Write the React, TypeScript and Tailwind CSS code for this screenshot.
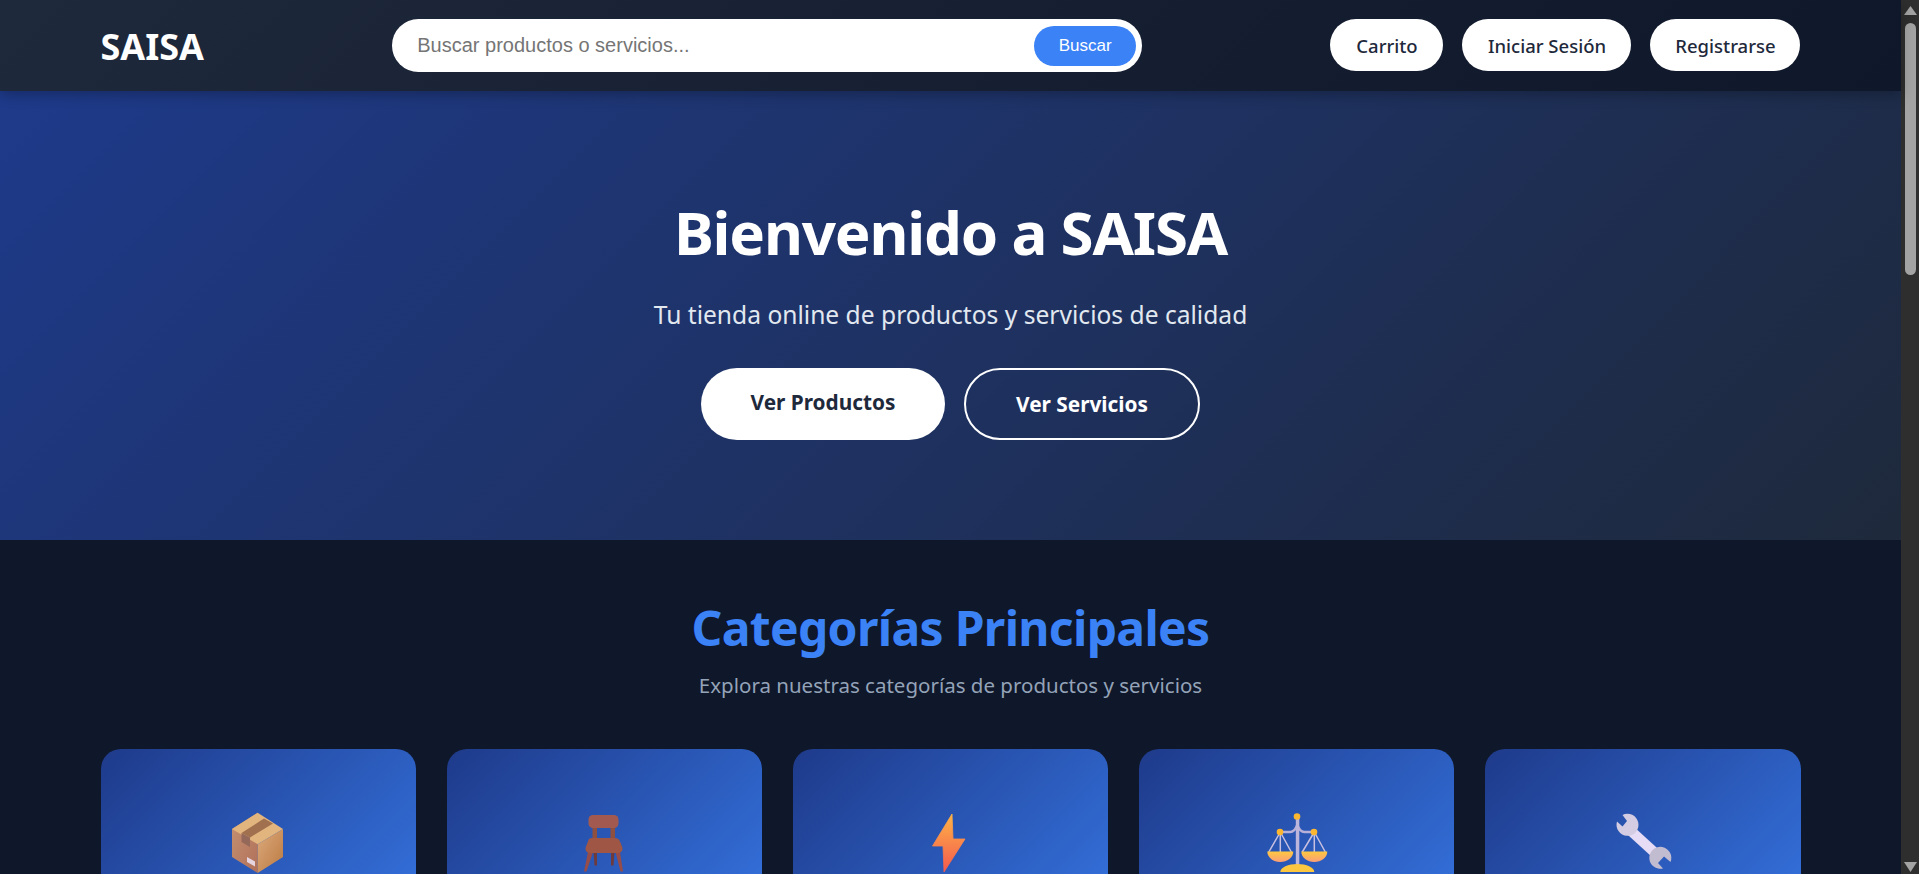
import React from 'react';

const BoxIcon = () => (
  <svg width="100" height="74" viewBox="0 0 100 74">
    <defs>
      <linearGradient id="boxLeft" x1="0" y1="0" x2="1" y2="1">
        <stop offset="0" stopColor="#c69272" />
        <stop offset="1" stopColor="#b0705a" />
      </linearGradient>
      <linearGradient id="boxRight" x1="0" y1="0" x2="1" y2="1">
        <stop offset="0" stopColor="#dcaa7c" />
        <stop offset="1" stopColor="#bb7a42" />
      </linearGradient>
    </defs>
    <g transform="translate(2 0)">
      <path d="M47.7 12.7 22 29v28l25.7 16z" fill="url(#boxLeft)" />
      <path d="M47.7 44.3 73 29v28L47.7 73z" fill="url(#boxRight)" />
      <path d="M47.7 12.7 73 29 47.7 44.3 22 29z" fill="#e2b47e" />
      <path d="M54 18.5 63 23.5 40 37.5 31.5 33z" fill="#a0704f" />
      <path d="M31.5 33 40 37.5V47l-8.5-5z" fill="#94695a" />
      <path d="M37 57l8 4.500V66.500l-8-4.500z" fill="#e6d5e0" />
    </g>
  </svg>
);

const ChairIcon = () => (
  <svg width="100" height="74" viewBox="0 0 100 74">
    <g transform="translate(5.500 0)">
      <rect x="33" y="27" width="4.500" height="14" fill="#8f5040" />
      <rect x="51" y="27" width="4.500" height="14" fill="#8f5040" />
      <path d="M34 52 35 65.500h2.500V52zM51.500 52v13.500H54L55 52z" fill="#6e3a3c" />
      <path d="M28.500 52 24.500 71.500h2.500L33.500 52zM56 52l5 19.500h2.500L60.500 52z" fill="#964c48" />
      <rect x="29" y="15" width="30" height="13" rx="4.500" fill="#a25a50" />
      <path d="M33 38h22c3 0 4.500 1 5.500 3.500l2 5c1.500 3.500-.5 6.500-4 6.500h-28c-3.500 0-5.500-3-4-6.500l2-5C29 39 30 38 33 38z" fill="#a05645" />
    </g>
  </svg>
);

const BoltIcon = () => (
  <svg width="100" height="74" viewBox="0 0 100 74">
    <defs>
      <linearGradient id="bolt" x1="0" y1="0" x2="0" y2="1">
        <stop offset="0" stopColor="#fdb346" />
        <stop offset="1" stopColor="#f4594f" />
      </linearGradient>
    </defs>
    <g transform="translate(9.500 0)">
      <path d="M42.500 14 43.500 39H55.500L34.500 72 33.500 46H23z" fill="url(#bolt)" stroke="url(#bolt)" strokeWidth="0.800" strokeLinejoin="round" />
    </g>
  </svg>
);

const ScaleIcon = () => (
  <svg width="100" height="74" viewBox="0 0 100 74">
    <defs>
      <linearGradient id="pan" x1="0" y1="0" x2="0" y2="1">
        <stop offset="0" stopColor="#fdc83f" />
        <stop offset="1" stopColor="#fb9e78" />
      </linearGradient>
    </defs>
    <g transform="translate(3.300 0)">
      <path d="M30 32 18.500 52M30 32V52M30 32 41 52" stroke="#c8c0e0" strokeWidth="1.500" fill="none" />
      <path d="M64 32 52 52M64 32V52M64 32 75 52" stroke="#c8c0e0" strokeWidth="1.500" fill="none" />
      <path d="M30 32h10c3 0 5-2 7-7 2 5 4 7 7 7h10" stroke="#b7b0d8" strokeWidth="2.500" fill="none" />
      <rect x="45.500" y="17" width="3.500" height="50" fill="#bdb6dc" />
      <path d="M17 51.500h26c0 6-6 10.500-13 10.500s-13-4.500-13-10.500zM51 51.500h26c0 6-6 10.500-13 10.500s-13-4.500-13-10.500z" fill="url(#pan)" />
      <path d="M30 72c0-4.500 8-8 17-8s17 3.500 17 8z" fill="#fdc83f" />
      <circle cx="46.700" cy="16.500" r="3.300" fill="#fdb62f" />
      <circle cx="29.700" cy="32" r="3.300" fill="#fdb62f" />
      <circle cx="63.700" cy="32" r="3.300" fill="#fdb62f" />
    </g>
  </svg>
);

const WrenchIcon = () => (
  <svg width="100" height="74" viewBox="0 0 100 74">
    <g transform="translate(7 0)">
      <path d="M31 31 54 52" stroke="#e6dcf5" strokeWidth="10" />
      <path d="M22.500 15A11 11 0 1 1 17 21.500L22.500 26.500 27 21Z" fill="#d3cce2" />
      <path d="M70.500 62A11 11 0 1 0 63 68.500L58 63 64 56.500Z" fill="#c2bcd0" />
    </g>
  </svg>
);

const categories = [
  { id: 'productos', icon: <BoxIcon /> },
  { id: 'muebles', icon: <ChairIcon /> },
  { id: 'energia', icon: <BoltIcon /> },
  { id: 'legal', icon: <ScaleIcon /> },
  { id: 'servicios', icon: <WrenchIcon /> },
];

export default function App() {
  return (
    <div className="flex h-[874px] overflow-hidden bg-[#0f172a] font-['Noto_Sans',sans-serif]">
      <div className="min-w-0 flex-1">
        {/* Header */}
        <header className="relative z-10 h-[91px] bg-[linear-gradient(135deg,#1e293b,#0f172a)] shadow-[0_4px_12px_rgba(0,0,0,0.25)]">
          <div className="mx-auto flex h-full w-[1700px] items-center justify-between">
            <div className="pt-[2px] text-[36px] font-bold leading-[48px] text-white">SAISA</div>
            <div className="flex h-[53px] w-[750px] items-center rounded-full bg-white pl-[25px] pr-[6px]">
              <span className="flex-1 pb-[2px] font-['Liberation_Sans',sans-serif] text-[20px] text-[#757575]">
                Buscar productos o servicios...
              </span>
              <button className="h-[40px] w-[102px] rounded-full bg-[#3b82f6] font-['Liberation_Sans',sans-serif] text-[17px] text-white">
                Buscar
              </button>
            </div>
            <div className="mb-[1px] flex gap-[19px]">
              <button className="h-[52px] w-[113px] rounded-full bg-white pt-[2px] text-[18.500px] font-medium text-[#1e293b]">Carrito</button>
              <button className="h-[52px] w-[169px] rounded-full bg-white pt-[2px] text-[18.500px] font-medium text-[#1e293b]">Iniciar Sesión</button>
              <button className="h-[52px] w-[150px] rounded-full bg-white pt-[2px] text-[18.500px] font-medium text-[#1e293b]">Registrarse</button>
            </div>
          </div>
        </header>

        {/* Hero */}
        <section className="flex h-[449px] flex-col items-center bg-[linear-gradient(135deg,#1e3a8a,#1e293b)] pt-[105px] text-white">
          <h1 className="text-[60px] font-bold leading-[72px] tracking-[-1.200px]">Bienvenido a SAISA</h1>
          <p className="mt-[29px] text-[24.600px] leading-[36px] text-[#e2e8f0]">Tu tienda online de productos y servicios de calidad</p>
          <div className="mt-[35px] flex gap-[19px]">
            <button className="h-[72px] w-[244px] rounded-full bg-white pb-[3px] text-[20.800px] font-bold text-[#1e293b]">Ver Productos</button>
            <button className="h-[72px] w-[236px] rounded-full border-2 border-white pt-[1px] text-[20.800px] font-bold text-white">Ver Servicios</button>
          </div>
        </section>

        {/* Categorias */}
        <section className="flex flex-col items-center pt-[50px]">
          <h2 className="text-[48px] font-bold leading-[76px] tracking-[-0.670px] text-[#3b82f6]">Categorías Principales</h2>
          <p className="mt-[4px] text-[20.500px] leading-[30px] text-[#94a3b8]">Explora nuestras categorías de productos y servicios</p>
          <div className="mt-[49px] grid w-[1700px] grid-cols-5 gap-[31px]">
            {categories.map((cat) => (
              <div key={cat.id} className="flex h-[310px] justify-center rounded-[20px] bg-[linear-gradient(135deg,#1e3a8a,#3b82f6)] pt-[51px]">
                {cat.icon}
              </div>
            ))}
          </div>
        </section>
      </div>

      {/* Scrollbar */}
      <div className="flex h-full w-[18px] shrink-0 flex-col items-center bg-[#2e2e2e] pb-[2px] pt-[6px]">
        <svg width="13" height="9" viewBox="0 0 13 9"><path d="M6.500 0 13 9H0z" fill="#a3a3a3" /></svg>
        <div className="mt-[8px] h-[252px] w-[11px] rounded-full bg-[#a3a3a3]" />
        <div className="flex-1" />
        <svg width="13" height="10" viewBox="0 0 13 10"><path d="M0 0h13L6.500 10z" fill="#a3a3a3" /></svg>
      </div>
    </div>
  );
}
